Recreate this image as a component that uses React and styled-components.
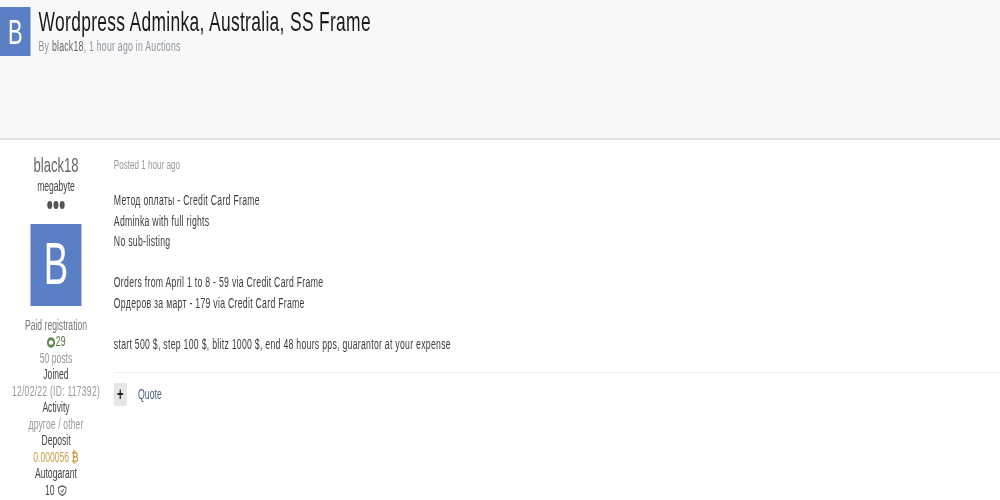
import styled, { createGlobalStyle } from "styled-components";

const SQUISH = 0.622;

const Global = createGlobalStyle`
  html, body { margin: 0; padding: 0; background: #fff; overflow: hidden; }
  body { font-family: "Liberation Sans", Arial, sans-serif; }
`;

// the whole shot is squeezed horizontally, avatars are really square
const Page = styled.div`
  width: ${1000 / SQUISH}px;
  height: 500px;
  overflow: hidden;
  transform: scaleX(${SQUISH});
  transform-origin: left top;
  filter: blur(0.3px);
`;

const Header = styled.header`
  display: flex;
  gap: 13px;
  height: 140px;
  box-sizing: border-box;
  padding-top: 7px;
  background: #f8f8f8;
  border-bottom: 2px solid #e4e4e4;
`;

const Avatar = styled.div`
  display: flex;
  align-items: center;
  justify-content: center;
  flex: none;
  width: ${(p) => p.$size}px;
  height: ${(p) => p.$size}px;
  background: #5b7fc4;
  color: #fff;
  font-size: ${(p) => p.$size * 0.72}px;
`;

const TitleBlock = styled.div`
  display: flex;
  flex-direction: column;
`;

const Title = styled.h1`
  margin: 0;
  font-size: 28px;
  font-weight: 400;
  letter-spacing: 0.52px;
  line-height: 30px;
  color: #1a1a1a;
`;

const Byline = styled.div`
  font-size: 14px;
  letter-spacing: 0.4px;
  line-height: 16px;
  margin-top: 1px;
  color: #8f96a0;
  b { font-weight: 400; color: #666; }
`;

const Post = styled.div`
  display: flex;
  padding-top: 13px;
`;

const Author = styled.aside`
  flex: none;
  width: 180px;
  margin-right: 3px;
  display: flex;
  flex-direction: column;
  align-items: center;
  font-size: 13.8px;
  line-height: 16.5px;
  color: #444;
  white-space: nowrap;
`;

const AuthorName = styled.div`
  font-size: 21px;
  line-height: 24px;
  color: #666;
`;

const Rank = styled.div`
  margin-top: 2px;
`;

const Pips = styled.div`
  display: flex;
  gap: 2px;
  margin: 5px 0 15px;
`;

const Pip = styled.span`
  width: 8px;
  height: 8px;
  border-radius: 50%;
  background: #555;
`;

const Meta = styled.div`
  display: flex;
  align-items: center;
  gap: 1px;
  letter-spacing: ${(p) => p.$spread || 0}px;
  color: ${(p) => p.$color || "#444"};
`;

const Group = styled(Meta)`
  margin-top: 12px;
`;

const Coin = styled.b`
  margin-left: 3px;
`;

const Content = styled.main`
  flex: 1;
  min-width: 0;
`;

const Posted = styled.div`
  font-size: 13px;
  line-height: 20px;
  color: #999;
  margin: 2px 0 15px;
`;

const Line = styled.p`
  margin: 0;
  height: 20.6px;
  font-size: 14px;
  letter-spacing: 0.44px;
  line-height: 20.6px;
  color: #3c3c3c;
`;

const Actions = styled.div`
  display: flex;
  align-items: center;
  gap: 18px;
  margin-top: 17px;
  padding-top: 10px;
  border-top: 1px solid #eee;
`;

const Plus = styled.span`
  display: flex;
  align-items: center;
  justify-content: center;
  width: 21px;
  height: 23px;
  border-radius: 2px;
  background: #e6e6e6;
  color: #222;
  font-size: 18px;
  font-weight: 700;
`;

const Quote = styled.a`
  font-size: 14px;
  color: #4a5f80;
`;

const lines = [
  "Метод оплаты - Credit Card Frame",
  "Adminka with full rights",
  "No sub-listing",
  "",
  "Orders from April 1 to 8 - 59 via Credit Card Frame",
  "Ордеров за март - 179 via Credit Card Frame",
  "",
  "start 500 $, step 100 $, blitz 1000 $, end 48 hours pps, guarantor at your expense",
];

export default function App() {
  return (
    <Page>
      <Global />
      <Header>
        <Avatar $size={49}>B</Avatar>
        <TitleBlock>
          <Title>Wordpress Adminka, Australia, SS Frame</Title>
          <Byline>By <b>black18</b>, 1 hour ago in Auctions</Byline>
        </TitleBlock>
      </Header>
      <Post>
        <Author>
          <AuthorName>black18</AuthorName>
          <Rank>megabyte</Rank>
          <Pips><Pip /><Pip /><Pip /></Pips>
          <Avatar $size={82}>B</Avatar>
          <Group $color="#777">Paid registration</Group>
          <Meta $color="#5a6f3f">
            <svg width="14" height="11" viewBox="0 0 14 11">
              <ellipse cx="7" cy="5.5" rx="5" ry="3.8" fill="none" stroke="#5f8a55" strokeWidth="3" />
            </svg>
            <span>29</span>
          </Meta>
          <Meta $color="#999">50 posts</Meta>
          <Meta>Joined</Meta>
          <Meta $color="#999" $spread={0.4}>12/02/22 (ID: 117392)</Meta>
          <Meta>Activity</Meta>
          <Meta $color="#999" $spread={0.2}>другое / other</Meta>
          <Meta>Deposit</Meta>
          <Meta $color="#c9a04a">0.000056<Coin>₿</Coin></Meta>
          <Meta>Autogarant</Meta>
          <Meta>
            10
            <svg width="16" height="11" viewBox="0 0 16 11" style={{ marginLeft: 3 }}>
              <path d="M8 .8 14 2.5v3C14 8 11 9.6 8 10.4 5 9.6 2 8 2 5.5v-3Z" fill="none" stroke="#444" strokeWidth="1.2" />
              <path d="M5.5 5.2 8 7.4l2.6-3.4" fill="none" stroke="#444" strokeWidth="1" />
            </svg>
          </Meta>
        </Author>
        <Content>
          <Posted>Posted 1 hour ago</Posted>
          {lines.map((l, i) => <Line key={i}>{l}</Line>)}
          <Actions>
            <Plus>+</Plus>
            <Quote>Quote</Quote>
          </Actions>
        </Content>
      </Post>
    </Page>
  );
}
